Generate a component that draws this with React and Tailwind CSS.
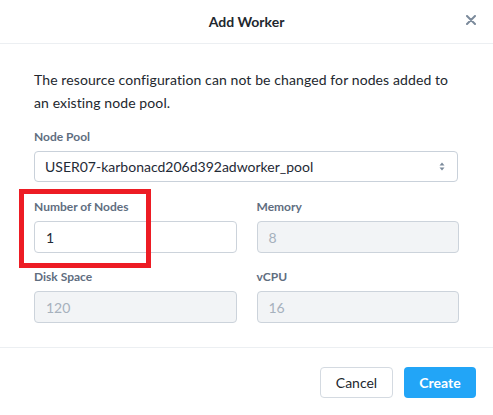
export default function App() {
  const font = { fontFamily: '"Lato", "Open Sans", sans-serif' };
  return (
    <div className="relative w-[493px] h-[415px] bg-white text-[#1f2a36]" style={font}>
      <div className="relative h-[44px] border-b border-[#eceff2] flex items-center justify-center">
        <span className="text-[14px] font-bold text-[#22272e]">Add Worker</span>
        <svg className="absolute left-[466px] top-[15px]" width="10" height="10" viewBox="0 0 10 10">
          <path d="M1 1L9 9M9 1L1 9" stroke="#7b8a9b" strokeWidth="2" strokeLinecap="round" />
        </svg>
      </div>
      <div className="px-[34px] pt-[24px] pb-[24px] border-b border-[#eceff2]">
        <p className="text-[14px] leading-[23px] text-[#22272e] tracking-[0.1px]">
          The resource configuration can not be changed for nodes added to an existing node pool.
        </p>
        <div className="mt-[15px] text-[12px] leading-[16px] font-bold text-[#5f6e7f]">Node Pool</div>
        <div className="mt-[6px] w-[424px] h-[31px] border border-[#c9d1da] rounded-[4px] flex items-center pl-[10px] pr-[12px]">
          <span className="flex-1 text-[14px]">USER07-karbonacd206d392adworker_pool</span>
          <svg width="6" height="9" viewBox="0 0 6 9">
            <path d="M3 0.5L5.5 3.5H0.5Z" fill="#7b8a9b" />
            <path d="M3 8.5L5.5 5.5H0.5Z" fill="#7b8a9b" />
          </svg>
        </div>
        <div className="mt-[17px] grid grid-cols-2 gap-x-[20px] gap-y-[16px] w-[425px]">
          <Field label="Number of Nodes" value="1" />
          <Field label="Memory" value="8" disabled />
          <Field label="Disk Space" value="120" disabled />
          <Field label="vCPU" value="16" disabled />
        </div>
      </div>
      <div className="flex justify-end gap-[11px] pt-[19px] pr-[17px]">
        <button className="w-[73px] h-[31px] border border-[#d4dae1] rounded-[4px] text-[14px] text-[#22272e] bg-white">Cancel</button>
        <button className="w-[72px] h-[31px] rounded-[4px] text-[14px] font-bold text-white bg-[#22a5f7]">Create</button>
      </div>
      <div className="absolute left-[19px] top-[189px] w-[132px] h-[79px] border-[5px] border-[#ed1c24]" />
    </div>
  );
}

function Field({ label, value, disabled }) {
  return (
    <div>
      <div className="text-[12px] leading-[16px] font-bold text-[#5f6e7f]">{label}</div>
      <div
        className={
          disabled
            ? "mt-[6px] h-[32px] border border-[#ccd3db] rounded-[4px] bg-[#f2f4f6] flex items-center pl-[11px] text-[14px] text-[#a6b1bd]"
            : "mt-[6px] h-[32px] border border-[#ccd3db] rounded-[4px] bg-white flex items-center pl-[11px] text-[14px] text-[#1f2a36]"
        }
      >
        {value}
      </div>
    </div>
  );
}
